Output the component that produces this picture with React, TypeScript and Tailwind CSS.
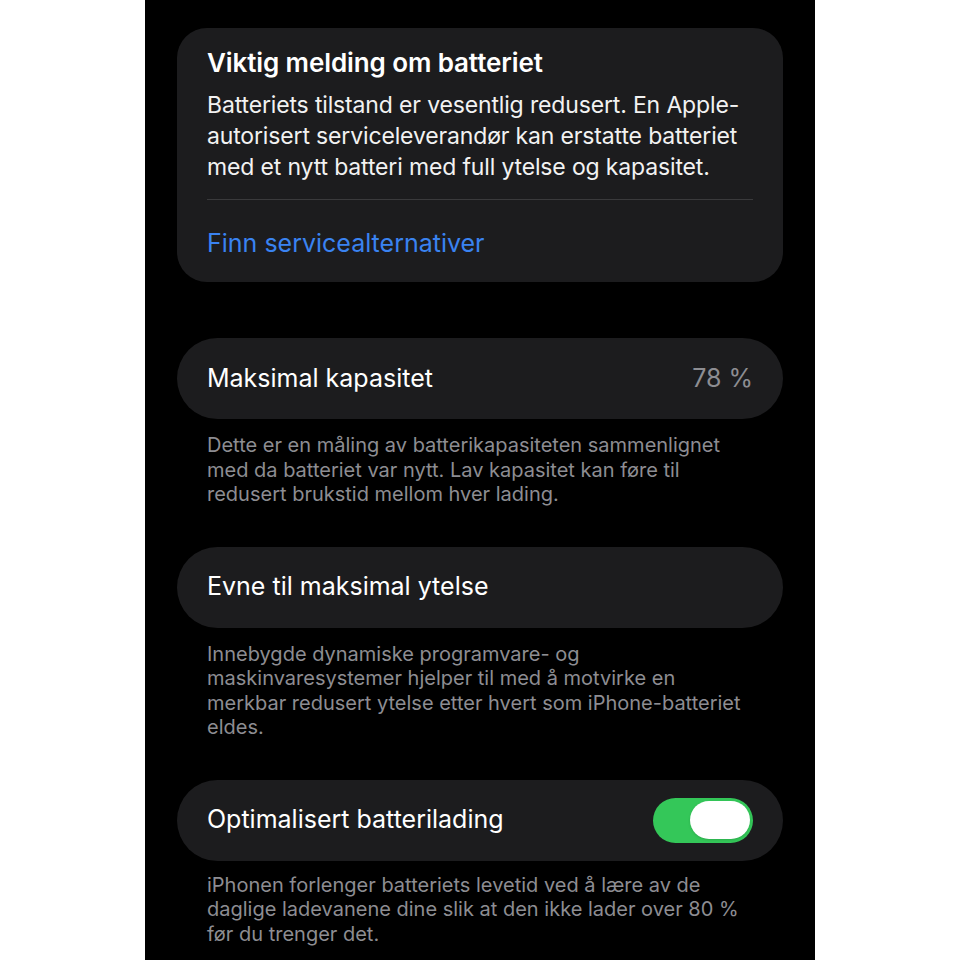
import React, { useState } from 'react';

const font = { fontFamily: 'Inter, "Noto Sans", sans-serif' };

const Footnote: React.FC<{ lines: string[]; className?: string }> = ({ lines, className }) => (
  <p className={`px-[30px] text-[20px] leading-[24.5px] text-[#8d8d92] ${className ?? ''}`}>
    {lines.map((l, i) => (
      <React.Fragment key={i}>
        {l}
        {i < lines.length - 1 && <br />}
      </React.Fragment>
    ))}
  </p>
);

const Row: React.FC<{ children: React.ReactNode; className?: string }> = ({ children, className }) => (
  <div className={`h-[81px] rounded-full bg-[#1c1c1e] px-[30px] flex items-center justify-between ${className ?? ''}`}>
    {children}
  </div>
);

const App: React.FC = () => {
  const [optimized, setOptimized] = useState(true);

  return (
    <div className="w-full h-[960px] bg-white overflow-hidden" style={font}>
      <div className="ml-[145px] w-[670px] h-full bg-black px-[32px] pt-[28px] antialiased">
        {/* viktig melding */}
        <div className="rounded-[30px] bg-[#1c1c1e] px-[30px] pt-[20px] pb-[24px]">
          <h2 className="text-[26px] leading-[30px] font-semibold text-white tracking-[-0.1px]">
            Viktig melding om batteriet
          </h2>
          <p className="mt-[12px] text-[23px] leading-[31px] text-[#f2f2f2] tracking-[-0.15px]">
            Batteriets tilstand er vesentlig redusert. En Apple-
            <br />
            autorisert serviceleverandør kan erstatte batteriet
            <br />
            med et nytt batteri med full ytelse og kapasitet.
          </p>
          <div className="mt-[16px] h-px bg-[#3a3a3c]" />
          <a className="block mt-[28px] text-[25px] leading-[30px] text-[#3a83f1]">
            Finn servicealternativer
          </a>
        </div>

        <Row className="mt-[56px]">
          <span className="text-[25px] text-white">Maksimal kapasitet</span>
          <span className="text-[25px] text-[#8d8d92]">78 %</span>
        </Row>
        <Footnote
          className="mt-[14px]"
          lines={[
            'Dette er en måling av batterikapasiteten sammenlignet',
            'med da batteriet var nytt. Lav kapasitet kan føre til',
            'redusert brukstid mellom hver lading.',
          ]}
        />

        <Row className="mt-[40px]">
          <span className="text-[25px] text-white">Evne til maksimal ytelse</span>
        </Row>
        <Footnote
          className="mt-[14px]"
          lines={[
            'Innebygde dynamiske programvare- og',
            'maskinvaresystemer hjelper til med å motvirke en',
            'merkbar redusert ytelse etter hvert som iPhone-batteriet',
            'eldes.',
          ]}
        />

        <Row className="mt-[40px]">
          <span className="text-[25px] text-white">Optimalisert batterilading</span>
          <button
            onClick={() => setOptimized(!optimized)}
            className={`w-[100px] h-[45px] rounded-full flex items-center px-[3px] ${
              optimized ? 'bg-[#34c759] justify-end' : 'bg-[#39393d] justify-start'
            }`}
          >
            <span className="block w-[60px] h-[38px] rounded-full bg-white shadow-sm" />
          </button>
        </Row>
        <Footnote
          className="mt-[12px]"
          lines={[
            'iPhonen forlenger batteriets levetid ved å lære av de',
            'daglige ladevanene dine slik at den ikke lader over 80 %',
            'før du trenger det.',
          ]}
        />
      </div>
    </div>
  );
};

export default App;
